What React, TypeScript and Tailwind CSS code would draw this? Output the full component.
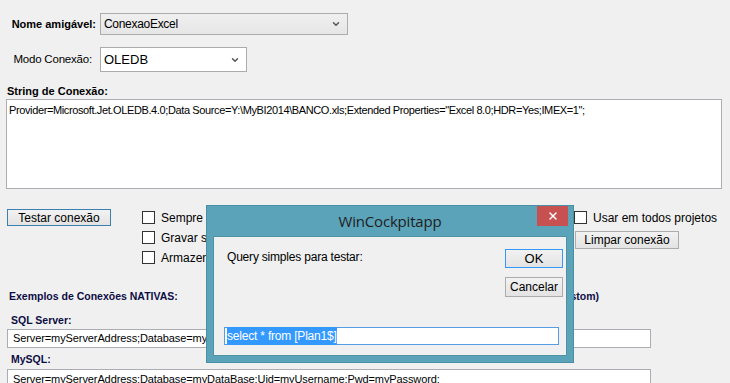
import { ChevronDown, X } from "lucide-react"

const font = "font-['Liberation_Sans',Arial,sans-serif]"

const Combo = ({ value, className }: { value: string; className: string }) => (
  <div className={`flex items-center justify-between border border-[#acacac] pl-[3px] pr-[6px] ${className}`}>
    <span>{value}</span>
    <ChevronDown className="w-[10px] h-[10px] text-[#555]" strokeWidth={3.5} />
  </div>
)

const Check = ({ label }: { label: string }) => (
  <div className="flex items-center h-[13px] gap-[6px] whitespace-nowrap">
    <div className="w-[13px] h-[13px] border border-[#333] bg-white shrink-0" />
    <span className="text-[12px] text-[#000]">{label}</span>
  </div>
)

const WinButton = ({ label, className }: { label: string; className: string }) => (
  <button className={`flex items-center justify-center bg-gradient-to-b from-[#f2f2f2] to-[#e3e3e3] text-[12px] text-[#000] ${className}`}>
    {label}
  </button>
)

const App = () => {
  return (
    <div className={`relative w-[730px] h-[383px] overflow-hidden bg-[#f0f0f0] text-[11px] text-black ${font}`}>
      <div className="flex items-center pt-[13px]">
        <label className="w-[100px] pr-[4px] text-right font-bold text-[11px]">Nome amigável:</label>
        <Combo value="ConexaoExcel" className="w-[248px] h-[22px] bg-gradient-to-b from-[#f0f0f0] to-[#e6e6e6] text-[12px] tracking-[-0.3px]" />
      </div>

      <div className="flex items-center mt-[12px]">
        <label className="w-[100px] pr-[8px] text-right text-[11.5px] tracking-[-0.2px]">Modo Conexão:</label>
        <Combo value="OLEDB" className="w-[147px] h-[25px] bg-white text-[13px]" />
      </div>

      <div className="mt-[13px] ml-[7px] font-bold text-[11px] leading-[13px]">String de Conexão:</div>
      <div className="ml-[6px] mt-[1px] w-[716px] h-[90px] border border-[#abadb3] bg-white px-[2px] py-[2px] text-[11px] tracking-[-0.38px] whitespace-nowrap">
        Provider=Microsoft.Jet.OLEDB.4.0;Data Source=Y:\MyBI2014\BANCO.xls;Extended Properties="Excel 8.0;HDR=Yes;IMEX=1";
      </div>

      <div className="flex items-start mt-[20px]">
        <WinButton label="Testar conexão" className="ml-[7px] w-[104px] h-[17px] border border-[#3c7fb1]" />
        <div className="ml-[31px] w-[432px] flex flex-col gap-[7px] pt-[2px]">
          <Check label="Sempre conectar" />
          <Check label="Gravar senha" />
          <Check label="Armazenar" />
        </div>
        <div className="flex flex-col gap-[7px] pt-[2px]">
          <Check label="Usar em todos projetos" />
          <WinButton label="Limpar conexão" className="ml-[1px] w-[104px] h-[18px] border border-[#acacac]" />
        </div>
      </div>

      <div className="flex items-center mt-[25px] text-[10.5px] font-bold text-[#0d0d45] whitespace-nowrap">
        <span className="ml-[9px] w-[300px]">Exemplos de Conexões NATIVAS:</span>
        <span className="w-[290px] text-right">Exemplos ODBC (Custom)</span>
      </div>

      <div className="ml-[11px] mt-[9px] text-[10.5px] font-bold text-[#0d0d45] leading-[13px]">SQL Server:</div>
      <div className="ml-[7px] mt-[2px] w-[644px] h-[19px] border border-[#abadb3] bg-white flex items-center px-[5px] text-[11px] tracking-[-0.1px] whitespace-nowrap">
        Server=myServerAddress;Database=myDataBase;
      </div>
      <div className="ml-[11px] mt-[5px] text-[10.5px] font-bold text-[#0d0d45] leading-[13px]">MySQL:</div>
      <div className="ml-[7px] mt-[3px] w-[644px] h-[19px] border border-[#abadb3] bg-white flex items-start pt-[1px] px-[5px] text-[11px] tracking-[-0.1px] whitespace-nowrap">
        Server=myServerAddress;Database=myDataBase;Uid=myUsername;Pwd=myPassword;
      </div>

      {/* modal dialog */}
      <div className="absolute left-[206px] top-[205px] w-[368px] h-[158px] bg-[#5ba3b9] border border-[#4a8fa3] flex flex-col">
        <div className="relative h-[30px] flex items-center justify-center">
          <span className="text-[15px] text-[#1e1e1e] font-['Open_Sans',sans-serif] tracking-[-0.2px]">WinCockpitapp</span>
          <div className="absolute right-[5px] top-0 w-[31px] h-[20px] bg-[#c75050] flex items-center justify-center">
            <X className="w-[12px] h-[12px] text-white" strokeWidth={3} />
          </div>
        </div>
        <div className="mx-[6px] mb-[6px] flex-1 bg-[#f0f0f0] border border-[#4f92a6] flex flex-col">
          <div className="flex justify-between">
            <span className="ml-[13px] mt-[11px] text-[12px] tracking-[-0.2px]">Query simples para testar:</span>
            <div className="mr-[3px] mt-[12px] flex flex-col gap-[9px]">
              <WinButton label="OK" className="w-[58px] h-[19px] border border-[#3399ff] text-[13px]" />
              <WinButton label="Cancelar" className="w-[58px] h-[20px] border border-[#acacac] text-[12px]" />
            </div>
          </div>
          <div className="ml-[10px] mt-auto mb-[10px] w-[335px] h-[18px] border border-[#569de5] bg-white flex items-center px-[2px] text-[12px]">
            <span className="bg-[#3399ff] text-white tracking-[-0.2px]">select * from [Plan1$]</span>
          </div>
        </div>
      </div>
    </div>
  )
}

export default App
